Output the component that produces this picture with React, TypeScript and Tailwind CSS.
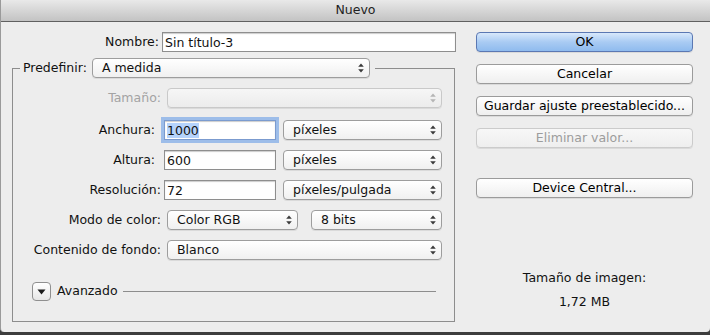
import React from 'react'

function Arrows({ disabled }: { disabled?: boolean }) {
  const c = disabled ? '#b5b5b5' : '#3a3a3a'
  return (
    <svg width="6" height="10" viewBox="0 0 6 10" className="shrink-0">
      <path d="M3 0.5 L5.8 3.8 H0.2 Z" fill={c} />
      <path d="M0.2 6.2 H5.8 L3 9.5 Z" fill={c} />
    </svg>
  )
}

function Select({ value, className, disabled }: { value?: string; className: string; disabled?: boolean }) {
  return (
    <div
      className={
        'h-[20px] flex items-center justify-between pl-[9px] pr-[5px] rounded-[4px] border shadow-[0_1px_0_rgba(0,0,0,0.08)] ' +
        (disabled
          ? 'border-[#c9c9c9] bg-linear-to-b from-[#f6f6f6] to-[#ececec]'
          : 'border-[#9d9d9d] bg-linear-to-b from-[#ffffff] to-[#f0f0f0]') +
        ' ' +
        className
      }
    >
      <span className="whitespace-nowrap leading-[16px]">{value}</span>
      <Arrows disabled={disabled} />
    </div>
  )
}

function Input({ value, className, focused }: { value: string; className: string; focused?: boolean }) {
  return (
    <div
      className={
        'h-[20px] flex items-center bg-white border px-[2px] shadow-[inset_0_1px_1px_rgba(0,0,0,0.2)] ' +
        (focused ? 'border-[#7b9bcf] ring-[3px] ring-[#9dbde9]' : 'border-[#8e8e8e]') +
        ' ' +
        className
      }
    >
      <span className={'whitespace-nowrap leading-[15px] ' + (focused ? 'bg-[#b5d3fc]' : '')}>{value}</span>
    </div>
  )
}

function Button({ children, primary, disabled, className = '' }: { children: React.ReactNode; primary?: boolean; disabled?: boolean; className?: string }) {
  let look = 'border-[#9b9b9b] bg-linear-to-b from-[#ffffff] to-[#efefef] text-black'
  if (primary) look = 'border-[#5b78b3] bg-linear-to-b from-[#d8e8fb] via-[#a9cbf3] to-[#8fbbee] text-black'
  if (disabled) look = 'border-[#cbcbcb] bg-linear-to-b from-[#f7f7f7] to-[#eeeeee] text-[#9c9c9c]'
  return (
    <div className={'h-[20px] w-[217px] rounded-[4px] border flex items-center justify-center shadow-[0_1px_0_rgba(0,0,0,0.08)] ' + look + ' ' + className}>
      {children}
    </div>
  )
}

function Row({ label, children, className = '', dim, labelClass = '' }: { label: string; children: React.ReactNode; className?: string; dim?: boolean; labelClass?: string }) {
  return (
    <div className={'flex items-center h-[20px] ' + className}>
      <div className={'w-[148px] text-right shrink-0 ' + (dim ? 'text-[#a3a3a3] ' : '') + labelClass}>{label}</div>
      {children}
    </div>
  )
}

export default function App() {
  return (
    <div className="w-[710px] h-[335px] bg-[#3d3d3d] font-['DejaVu_Sans',sans-serif] text-[12.5px] text-[#111]">
      <div className="h-[332px] bg-[#ededed] rounded-b-[4px] border-l border-[#9a9a9a] overflow-hidden">
        <div className="h-[22px] border-b border-[#606060] bg-linear-to-b from-[#e9e9e9] to-[#c3c3c3] flex items-center justify-center text-[#222]">
          Nuevo
        </div>

        <div className="flex">
          <div className="w-[475px] shrink-0">
            <div className="flex items-center h-[20px] mt-[10px]">
              <div className="w-[158px] text-right">Nombre:</div>
              <Input value="Sin título-3" className="ml-[3px] w-[294px]" />
            </div>

            <div className="mt-[16px] ml-[11px] w-[443px] h-[254px] border border-[#8d8d8d]">
              <div className="-mt-[11px] ml-[7px] w-fit flex items-center bg-[#ededed] pl-[3px] pr-[5px]">
                <span>Predefinir:</span>
                <Select value="A medida" className="ml-[5px] w-[278px]" />
              </div>

              <Row label="Tamaño:" dim className="mt-[10px]">
                <Select className="ml-[6px] w-[275px]" disabled />
              </Row>
              <Row label="Anchura:" labelClass="pr-[6px]" className="mt-[12px]">
                <Input value="1000" focused className="ml-[3px] w-[112px]" />
                <Select value="píxeles" className="ml-[7px] w-[159px]" />
              </Row>
              <Row label="Altura:" labelClass="pr-[6px]" className="mt-[10px]">
                <Input value="600" className="ml-[3px] w-[112px]" />
                <Select value="píxeles" className="ml-[7px] w-[159px]" />
              </Row>
              <Row label="Resolución:" className="mt-[10px]">
                <Input value="72" className="ml-[3px] w-[112px]" />
                <Select value="píxeles/pulgada" className="ml-[7px] w-[159px]" />
              </Row>
              <Row label="Modo de color:" className="mt-[10px]">
                <Select value="Color RGB" className="ml-[6px] w-[131px]" />
                <Select value="8 bits" className="ml-[13px] w-[131px]" />
              </Row>
              <Row label="Contenido de fondo:" className="mt-[10px]">
                <Select value="Blanco" className="ml-[6px] w-[275px]" />
              </Row>

              <div className="mt-[22px] ml-[19px] flex items-center">
                <div className="w-[19px] h-[19px] rounded-[4px] border border-[#8f8f8f] bg-linear-to-b from-[#ffffff] to-[#e6e6e6] flex items-center justify-center">
                  <svg width="9" height="6" viewBox="0 0 9 6">
                    <path d="M0.5 0.5 H8.5 L4.5 5.5 Z" fill="#1a1a1a" />
                  </svg>
                </div>
                <span className="ml-[6px]">Avanzado</span>
                <div className="flex-1 h-px bg-[#8d8d8d] ml-[5px] mr-[18px]" />
              </div>
            </div>
          </div>

          <div className="w-[217px] pt-[10px] flex flex-col">
            <Button primary>OK</Button>
            <Button className="mt-[12px]">Cancelar</Button>
            <Button className="mt-[12px]">Guardar ajuste preestablecido...</Button>
            <Button disabled className="mt-[12px]">Eliminar valor...</Button>
            <Button className="mt-[30px]">Device Central...</Button>
            <div className="mt-[72px] h-[16px] leading-[16px] text-center">Tamaño de imagen:</div>
            <div className="mt-[8px] h-[16px] leading-[16px] text-center">1,72 MB</div>
          </div>
        </div>
      </div>
    </div>
  )
}
